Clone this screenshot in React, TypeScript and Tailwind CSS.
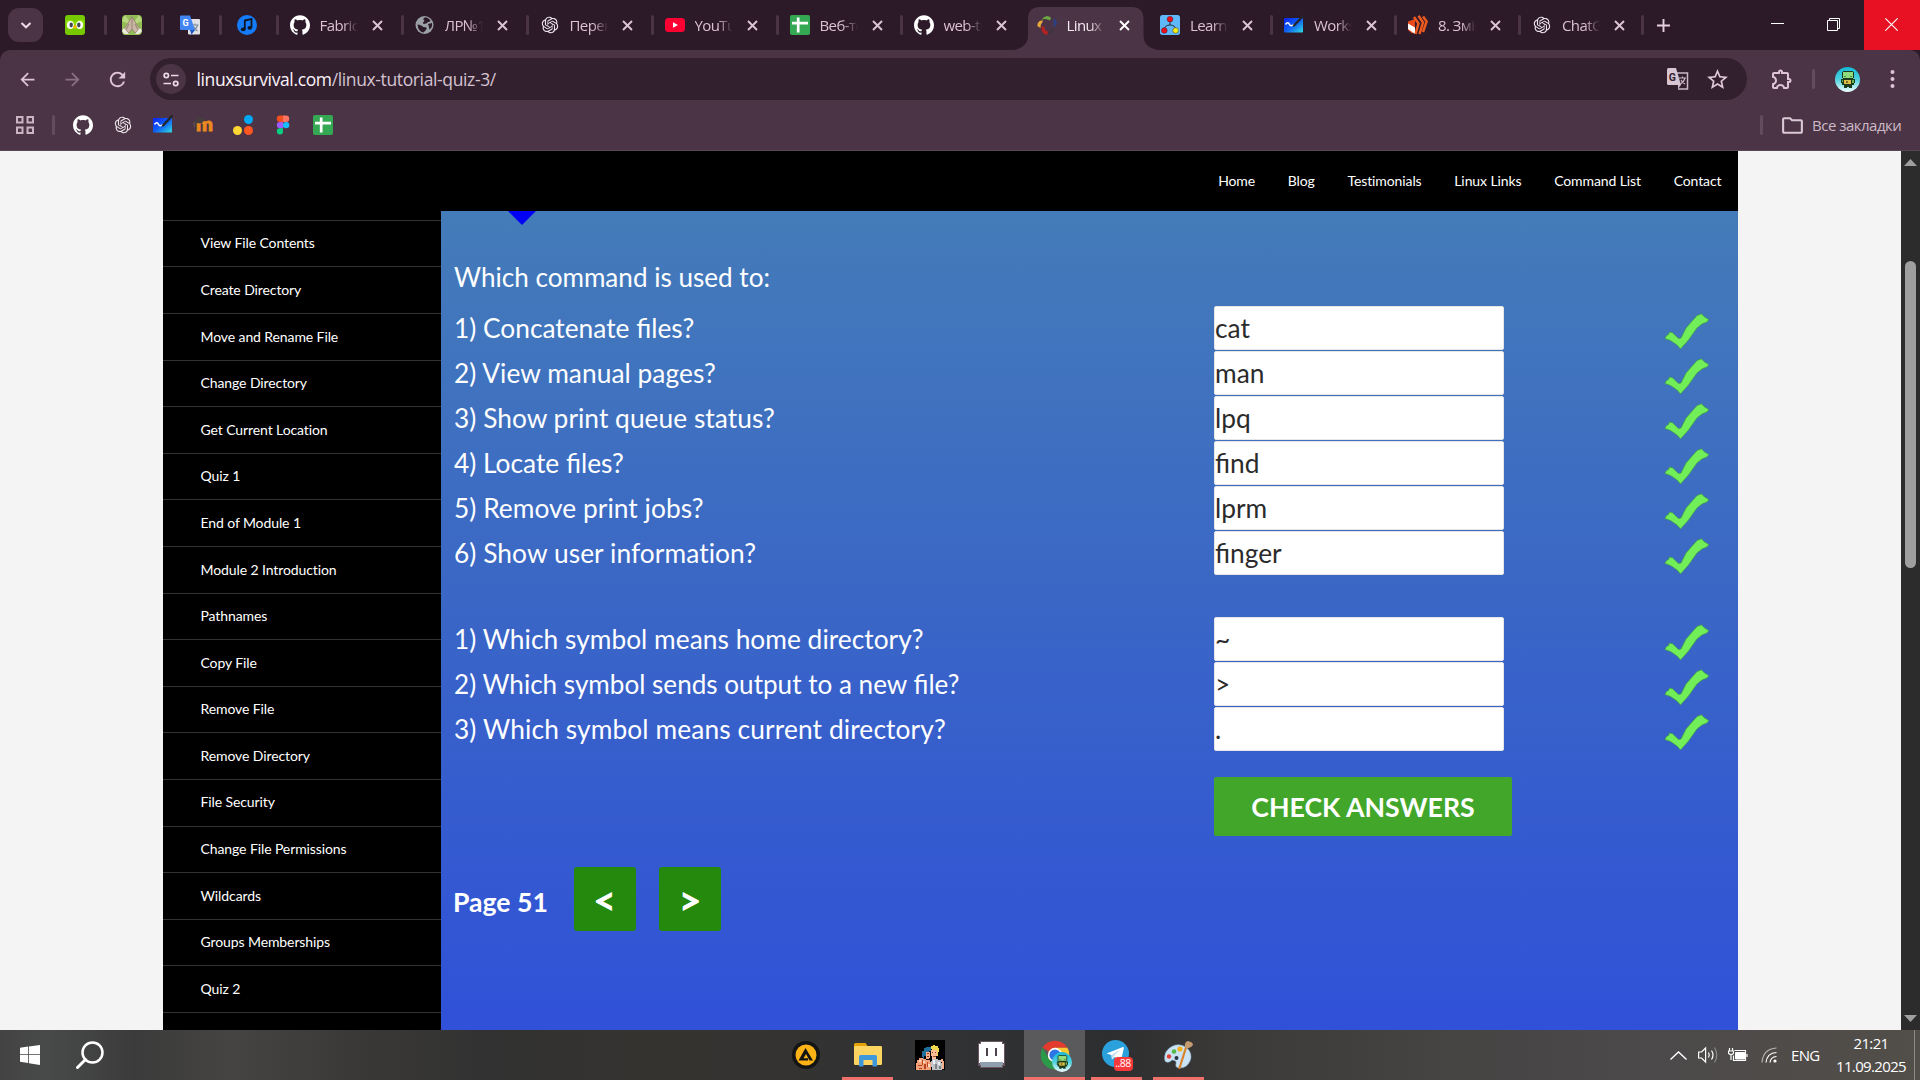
import React from "react";
import { SiGithub } from "react-icons/si";
import { RiOpenaiFill } from "react-icons/ri";
import {
  MdArrowBack,
  MdArrowForward,
  MdRefresh,
  MdOutlineExtension,
  MdStarOutline,
  MdOutlineFolder,
} from "react-icons/md";

const UI = "font-['Open_Sans','Noto_Sans',sans-serif]";

/* ---------- site icons ---------- */

const Duo = () => (
  <svg className="size-5" viewBox="0 0 20 20">
    <rect width="20" height="20" rx="3" fill="#78c800" />
    <path d="M1 6q4-3 9 1 5-4 9-1v5q-3 5-9 2-6 3-9-2z" fill="#8ee000" />
    <ellipse cx="5.4" cy="10" rx="3.4" ry="4" fill="#fff" />
    <ellipse cx="14.6" cy="10" rx="3.4" ry="4" fill="#fff" />
    <ellipse cx="6.2" cy="10" rx="1.7" ry="2.4" fill="#3c4a54" />
    <ellipse cx="13.8" cy="10" rx="1.7" ry="2.4" fill="#3c4a54" />
    <path d="M8 11.5l2-1.8 2 1.8-2 2.8z" fill="#ffb100" />
  </svg>
);

const Hands = () => (
  <svg className="size-5" viewBox="0 0 20 20">
    <rect width="20" height="20" rx="4" fill="#93bd55" />
    <path d="M0 6L10 10 3 0zM20 6L10 10 17 0zM0 15l9-4-7 9z" fill="#b9d77f" />
    <path d="M9.8 1.5L5 10 2 14l5 4 3-4 3 4 5-4-3-4z" fill="#c9b6a4" stroke="#8a7768" strokeWidth=".7" />
    <path d="M10 3v11M7 9l-3 6M13 9l3 6" stroke="#8a7768" strokeWidth=".8" />
    <path d="M2 13l5 6H3l-3-3zM18 13l-5 6h4l3-3z" fill="#efe9df" />
  </svg>
);

const TranslateBlue = () => (
  <svg className="size-5" viewBox="0 0 20 20">
    <rect x="8" y="4" width="12" height="15.5" rx="1" fill="#dfe1e5" />
    <path d="M11.5 10h7M15 8.500V10M17.500 10q-1 4-5 6M13.500 11.500q1.500 3 4 4.500" stroke="#7b8a99" strokeWidth="1.100" fill="none" />
    <path d="M1 .5h9l5 14.500H1a1 1 0 0 1-1-1v-12.500a1 1 0 0 1 1-1z" fill="#4285f4" />
    <path d="M10 15h5l-3.500 4.500z" fill="#1a56c4" />
    <text x="2.600" y="11" fontSize="9" fontWeight="700" fill="#fff" fontFamily="Roboto">G</text>
  </svg>
);

const Music = () => (
  <svg className="size-5" viewBox="0 0 20 20">
    <circle cx="10" cy="10" r="10" fill="#147cfb" />
    <path d="M7.500 5.500l7-1.500v8.500" stroke="#101522" strokeWidth="1.800" fill="none" />
    <path d="M7.800 5v9.500" stroke="#101522" strokeWidth="1.800" />
    <ellipse cx="6.200" cy="14.300" rx="2.300" ry="1.900" fill="#101522" />
    <ellipse cx="12.800" cy="12.800" rx="2.300" ry="1.900" fill="#101522" />
  </svg>
);

const Github = () => <SiGithub className="size-5 text-white" />;
const Gpt = () => <RiOpenaiFill className="size-5 text-[#eee6ec]" />;

const Globe = () => (
  <svg className="size-5" viewBox="0 0 20 20">
    <circle cx="9.500" cy="10" r="9" fill="#9aa0a6" />
    <path d="M2.500 9.500q3 0 4.500 1.500t3.500 1.200q2 .5.500 2.800l-2.500 2.500Q3 16.500 2.500 9.500zM10.500 2.300q3 .2 5 3.200-1 1.800-2.600 1.500-1.200 2-3 1.800-2.700.5-1.700-1.600Q10.700 5 8 4.500q.5-2 2.500-2.200z" fill="#2d1a29" />
    <path d="M13 9l4-1q.8 4-2.500 6.500Q14 11 13 9z" fill="#2d1a29" />
  </svg>
);

const Youtube = () => (
  <svg className="size-5" viewBox="0 0 20 20">
    <rect y="3" width="20" height="14" rx="3.500" fill="#ff0033" />
    <path d="M8 7.200v5.600L13 10z" fill="#fff" />
  </svg>
);

const Sheets = () => (
  <svg className="size-5" viewBox="0 0 20 20">
    <rect width="20" height="20" rx="2" fill="#34a853" />
    <path d="M2 8.200h16M8.200 2.500v15" stroke="#fff" strokeWidth="2.700" />
  </svg>
);

const LinuxFav = () => (
  <svg className="size-5" viewBox="0 0 20 20">
    <path d="M4.500 4.500Q9-1.500 14 2.500l-1 3Q9 3 4.500 4.500z" fill="#6da544" />
    <path d="M16.500 3q3.500 2 3.500 6l-4 3.500q1-5 .5-9.500z" fill="#2a4284" />
    <path d="M.3 11Q.5 5 6 5.500l-1 2.500q-1.500 1-1.500 5z" fill="#e9a93a" />
    <path d="M4.500 11q-1 8 5.500 9l2-3.500q-4.500 0-4.500-5z" fill="#b02323" />
    <path d="M10.500 16.500q3 .5 5-2l1-2.500q1 5-4 7z" fill="#3c3540" />
  </svg>
);

const GitTree = () => (
  <svg className="size-5" viewBox="0 0 20 20">
    <rect width="20" height="20" rx="2.500" fill="#5fb8fa" />
    <path d="M10 5v5M4.500 14q.5-4 5.500-4t5.500 4" stroke="#23303c" strokeWidth="1" fill="none" />
    <circle cx="10" cy="4.200" r="2.800" fill="#f20d1b" stroke="#5b1620" strokeWidth=".6" />
    <circle cx="4.300" cy="15.500" r="2.800" fill="#f20d1b" stroke="#5b1620" strokeWidth=".6" />
    <circle cx="15.600" cy="15.500" r="2.800" fill="#f6f11c" stroke="#4b4b16" strokeWidth=".6" />
  </svg>
);

const Whiteboard = () => (
  <svg className="size-5" viewBox="0 0 20 20">
    <defs>
      <linearGradient id="wb" x1="0" y1="0" x2="1" y2="1">
        <stop offset="0" stopColor="#0a22f0" />
        <stop offset=".5" stopColor="#0f5ff5" />
        <stop offset="1" stopColor="#2fe0e0" />
      </linearGradient>
    </defs>
    <rect y="3" width="19" height="14.500" rx=".8" fill="url(#wb)" />
    <path d="M1.500 9.500q2.500-3.500 4 0 1.200 2.500 4.500 0" stroke="#fff" strokeWidth="1.500" fill="none" />
    <path d="M10 10.500L19 1" stroke="#23252b" strokeWidth="2.400" strokeLinecap="round" />
  </svg>
);

const Stripes = () => (
  <svg className="size-5" viewBox="0 0 20 20">
    <path d="M0 6.500L7 4v12.500l-3 2L0 15z" fill="#e8481c" />
    <path d="M0 8.500l7 4v6.500l-7-5z" fill="#fff" />
    <path d="M6 2l4.500 6.500L7.500 19M10.500 .8L15 7.500 11.500 19M15 1.500l3.700 5L15 17" stroke="#ec5a20" strokeWidth="2.500" fill="none" />
  </svg>
);

const Moodle = () => (
  <svg className="size-5" viewBox="0 0 20 20">
    <text x="3" y="16" fontSize="19" fontWeight="900" fill="#ea8a1e" stroke="#ea8a1e" strokeWidth=".9" fontFamily="Lato" textLength="17" lengthAdjust="spacingAndGlyphs">m</text>
    <path d="M0 6.500l6-4 7 1-4.500 5L2 8z" fill="#463d40" />
    <path d="M1.200 7v5" stroke="#6b5a5c" strokeWidth="1" />
  </svg>
);

const Dots3 = () => (
  <svg className="size-5" viewBox="0 0 20 20">
    <circle cx="15.500" cy="4.500" r="4.500" fill="#00a8f5" />
    <circle cx="4.500" cy="15.500" r="4.500" fill="#ffd735" />
    <circle cx="15.500" cy="15.500" r="4.500" fill="#ff5722" />
  </svg>
);

const Figma = () => (
  <svg className="size-5" viewBox="0 0 20 20">
    <path d="M10 .5H7a3.200 3.200 0 0 0 0 6.400h3z" fill="#f24e1e" />
    <path d="M10 .5h3a3.200 3.200 0 0 1 0 6.400h-3z" fill="#ff7262" />
    <path d="M10 6.900H7a3.200 3.200 0 0 0 0 6.400h3z" fill="#a259ff" />
    <circle cx="13.100" cy="10.100" r="3.200" fill="#1abcfe" />
    <path d="M7 13.300h3v3a3.100 3.100 0 1 1-3-3z" fill="#0acf83" />
  </svg>
);

/* ---------- browser ---------- */

const CloseX = ({ active = false }: { active?: boolean }) => (
  <svg
    className={active ? "size-[11px] shrink-0 text-white" : "size-[11px] shrink-0 text-[#dcc5d6]"}
    viewBox="0 0 11 11"
  >
    <path d="M1 1l9 9M10 1l-9 9" stroke="currentColor" strokeWidth="1.900" />
  </svg>
);

const pinned = [
  { icon: <Duo />, w: "w-[57px]", pad: "pl-[15px]" },
  { icon: <Hands />, w: "w-[57px]", pad: "pl-[15px]" },
  { icon: <TranslateBlue />, w: "w-[58px]", pad: "pl-[16px]" },
  { icon: <Music />, w: "w-[57px]", pad: "pl-[15px]" },
];

const tabs = [
  { title: "Fabric.js", icon: <Github />, w: "w-[125px]", sep: true },
  { title: "ЛР№1", icon: <Globe />, w: "w-[125px]", sep: true },
  { title: "Перекл", icon: <Gpt />, w: "w-[125px]", sep: true },
  { title: "YouTube", icon: <Youtube />, w: "w-[125px]", sep: true },
  { title: "Веб-тех", icon: <Sheets />, w: "w-[124px]", sep: true },
  { title: "web-tech", icon: <Github />, w: "w-[123px]", sep: false },
  { title: "Linux S", icon: <LinuxFav />, w: "w-[123.500px]", sep: false, active: true },
  { title: "Learn G", icon: <GitTree />, w: "w-[124px]", sep: true },
  { title: "Works", icon: <Whiteboard />, w: "w-[124px]", sep: true },
  { title: "8. Змін", icon: <Stripes />, w: "w-[124px]", sep: true },
  { title: "ChatGPT", icon: <Gpt />, w: "w-[123px]", sep: true },
];

function TabStrip() {
  return (
    <div className="flex h-[50px] shrink-0 items-center bg-[#2d1a29]">
      <div className="ml-2 flex h-[34px] w-[35px] items-center justify-center rounded-[11px] bg-[#4a3445]">
        <svg className="size-3" viewBox="0 0 12 12">
          <path d="M1.500 4l4.500 4.300L10.500 4" stroke="#eedbe8" strokeWidth="2" fill="none" />
        </svg>
      </div>
      <div className="ml-[7px] flex items-center">
        {pinned.map((p, i) => (
          <div key={i} className={`flex shrink-0 items-center justify-between ${p.w} ${p.pad}`}>
            {p.icon}
            <i className="h-5 w-[3px] rounded-sm bg-[#4a3445]" />
          </div>
        ))}
      </div>
      <div className="-ml-[0.500px] flex">
        {tabs.map((t) => (
          <div key={t.title} className={`relative flex h-[50px] shrink-0 items-center pl-[11px] ${t.w}`}>
            {t.active && (
              <svg className="absolute top-[7px] -left-[13px] h-[43px] w-[147px]" viewBox="0 0 147 43">
                <path d="M0 43Q15 41 15 28V12Q15 0 27 0H118.500Q130.500 0 130.500 12V28Q130.500 41 145.500 43Z" fill="#4a3445" />
              </svg>
            )}
            <div className="relative size-5 shrink-0">{t.icon}</div>
            <div
              className={
                t.active
                  ? `relative mt-px ml-[10px] w-[38px] overflow-hidden whitespace-nowrap text-[15px] tracking-[-0.600px] text-[#f5e8f1] [mask-image:linear-gradient(90deg,#000_60%,transparent)] ${UI}`
                  : `relative mt-px ml-[10px] w-[38px] overflow-hidden whitespace-nowrap text-[15px] tracking-[-0.600px] text-[#dcc0d5] [mask-image:linear-gradient(90deg,#000_60%,transparent)] ${UI}`
              }
            >
              {t.title}
            </div>
            <div className="relative ml-[14px] flex">
              <CloseX active={t.active} />
            </div>
            {t.sep && <i className="ml-auto h-5 w-[3px] rounded-sm bg-[#4a3445]" />}
          </div>
        ))}
      </div>
      <svg className="ml-[13px] size-[13px] shrink-0" viewBox="0 0 13 13">
        <path d="M0 6.500h13M6.500 0v13" stroke="#e6cfe0" strokeWidth="1.900" />
      </svg>
      <div className="ml-auto flex h-full shrink-0">
        <div className="flex w-[56px] items-center justify-center pr-[5px] pb-[3px]">
          <i className="h-px w-[13px] bg-white" />
        </div>
        <div className="flex w-[56px] items-center justify-center pr-[5px] pb-px">
          <svg className="size-[13px]" viewBox="0 0 13 13" fill="none" stroke="#fff">
            <path d="M.5 2.500h10v10H.5zM2.500 2.500v-2h10v10h-2" />
          </svg>
        </div>
        <div className="flex w-[56px] items-center justify-center bg-[#e81123] pr-px pb-px">
          <svg className="size-[13px]" viewBox="0 0 13 13">
            <path d="M.3.3l12.400 12.400M12.700.3L.3 12.700" stroke="#fff" strokeWidth="1.100" />
          </svg>
        </div>
      </div>
    </div>
  );
}

const Avatar = ({ className }: { className: string }) => (
  <svg className={className} viewBox="0 0 25 25">
    <defs>
      <linearGradient id="av" x1="0" y1="0" x2="0" y2="1">
        <stop offset="0" stopColor="#12b8d4" />
        <stop offset=".5" stopColor="#4fd0df" />
        <stop offset="1" stopColor="#f1ffff" />
      </linearGradient>
    </defs>
    <circle cx="12.500" cy="12.500" r="12.500" fill="url(#av)" />
    <path d="M8 4h10v1h1v6h-1v1h2v4h-1v2h-2v3h-3v-1h-2v1H9v-3H7v-2H6v-4h2v-1H7V5h1z" fill="#1d3a1c" />
    <path d="M8 5h10v6H8z" fill="#8fdc7c" />
    <path d="M9 9h2v1H9zM15 9h2v1h-2z" fill="#4d8a45" />
    <path d="M9 13h7v4H9z" fill="#d9c04a" />
    <path d="M11 14h2v2h-2z" fill="#8a6a1f" />
    <path d="M17 13h2v3h-2zM7 13h1v2H7z" fill="#63b552" />
  </svg>
);

function Toolbar() {
  return (
    <div className="flex h-[50px] shrink-0 items-center pt-[8px]">
      <MdArrowBack className="ml-[17px] size-[21px] text-[#dfc4d8]" />
      <MdArrowForward className="ml-[24px] size-[21px] text-[#8b7084]" />
      <MdRefresh className="ml-[23px] size-[23px] text-[#dfc4d8]" />
      <div className="ml-[21px] flex h-[42px] w-[1597px] items-center rounded-full bg-[#33202f] pl-[6px]">
        <div className="flex size-[30px] items-center justify-center rounded-full bg-[#4a3445]">
          <svg className="h-[15px] w-4" viewBox="0 0 16 15" fill="none" stroke="#ecdbe7" strokeWidth="1.700">
            <circle cx="3.300" cy="3.500" r="2.200" />
            <path d="M8 3.500h7.500M.5 11.500H8" />
            <circle cx="12.700" cy="11.500" r="2.200" />
          </svg>
        </div>
        <div className={`mt-px ml-[10.500px] whitespace-nowrap text-[17.500px] tracking-[-0.370px] text-[#d4c3cf] ${UI}`}>
          <span className="text-[#fbf3f9]">linuxsurvival.com</span>/linux-tutorial-quiz-3/
        </div>
        <svg className="ml-auto size-[22px]" viewBox="0 0 22 22">
          <path d="M9 5h11.500v16H11" fill="none" stroke="#cdb9c7" strokeWidth="1.500" />
          <path d="M1.500 0H9l5 17H1.500Q0 17 0 15.500v-14Q0 0 1.500 0z" fill="#d8c6d3" />
          <path d="M12 10h7M15.500 8.500V10M18 10q-1 4-4.500 6M14 12q1.500 2.500 4 4" stroke="#cdb9c7" strokeWidth="1.200" fill="none" />
          <path d="M11 17h3l-3 4z" fill="#cdb9c7" />
          <text x="1.800" y="12.500" fontSize="10.500" fontWeight="700" fill="#33202f" fontFamily="Roboto">G</text>
        </svg>
        <MdStarOutline className="mr-[17px] ml-[16px] size-[25px] text-[#dfc9da]" />
      </div>
      <MdOutlineExtension className="ml-[23px] size-[24px] text-[#dfc4d8]" />
      <i className="ml-[18px] h-5 w-[3px] rounded-sm bg-[#644c5f]" />
      <Avatar className="ml-[20px] size-[25px]" />
      <svg className="ml-[30px] h-5 w-[5px]" viewBox="0 0 5 20" fill="#dfc4d8">
        <circle cx="2.500" cy="3" r="2" />
        <circle cx="2.500" cy="10" r="2" />
        <circle cx="2.500" cy="17" r="2" />
      </svg>
    </div>
  );
}

function Bookmarks() {
  return (
    <div className="flex h-[50px] shrink-0 items-center">
      <svg className="ml-[15.500px] size-[18px]" viewBox="0 0 18 18" fill="none" stroke="#cbb5c5" strokeWidth="2">
        <path d="M1 1h5.500v5.500H1zM11.500 1H17v5.500h-5.500zM1 11.500h5.500V17H1zM11.500 11.500H17V17h-5.500z" />
      </svg>
      <i className="ml-[18.500px] h-5 w-[3px] rounded-sm bg-[#644c5f]" />
      <div className="ml-[18px] flex gap-[20px]">
        <Github />
        <Gpt />
        <Whiteboard />
        <Moodle />
        <Dots3 />
        <Figma />
        <Sheets />
      </div>
      <i className="ml-auto h-5 w-[3px] rounded-sm bg-[#644c5f]" />
      <MdOutlineFolder className="ml-[17px] size-[25px] text-[#dcc9d7]" />
      <span className={`ml-[7px] w-[108px] whitespace-nowrap text-[15px] tracking-[-0.500px] text-[#cdb9c7] ${UI}`}>
        Все закладки
      </span>
    </div>
  );
}

/* ---------- page ---------- */

const menu = [
  "View File Contents",
  "Create Directory",
  "Move and Rename File",
  "Change Directory",
  "Get Current Location",
  "Quiz 1",
  "End of Module 1",
  "Module 2 Introduction",
  "Pathnames",
  "Copy File",
  "Remove File",
  "Remove Directory",
  "File Security",
  "Change File Permissions",
  "Wildcards",
  "Groups Memberships",
  "Quiz 2",
];

const commands = [
  { q: "1) Concatenate files?", a: "cat", cls: "" },
  { q: "2) View manual pages?", a: "man", cls: "tracking-[0.050px]" },
  { q: "3) Show print queue status?", a: "lpq", cls: "tracking-[0.040px]" },
  { q: "4) Locate files?", a: "find", cls: "" },
  { q: "5) Remove print jobs?", a: "lprm", cls: "tracking-[0.050px]" },
  { q: "6) Show user information?", a: "finger", cls: "tracking-[0.080px]" },
];

const symbols = [
  { q: "1) Which symbol means home directory?", a: "~", cls: "tracking-[0.030px]" },
  { q: "2) Which symbol sends output to a new file?", a: ">", cls: "text-[26.100px]" },
  { q: "3) Which symbol means current directory?", a: ".", cls: "tracking-[0.120px]" },
];

const Check = () => (
  <svg className="mt-[7px] h-[37px] w-[46px]" viewBox="0 0 46 37">
    <path
      d="M.8 25.500L2.500 22.500 4.500 21.500 5.500 19 8.500 19.800 14.500 25.500 17 25 22 15 29 7 33 2.500 37.500.8 40 3.500 44.800 6.500 43 9 38 11 33 15 24.500 27 21 31 16.500 36 13 32 6.500 27.500z"
      fill="#72ef58"
      stroke="#3f9a4c"
      strokeWidth=".8"
    />
  </svg>
);

function QuizRow({ q, a, cls }: { q: string; a: string; cls: string }) {
  return (
    <div className="flex h-[45px]">
      <div className={`h-[44px] w-[760px] leading-[44px] ${cls}`}>{q}</div>
      <div className="h-[44px] w-[290px] rounded-[2px] border border-[#e6e6e6] bg-white leading-[42px] text-[#2b2b2b]">
        {a}
      </div>
      <div className="ml-[160px]">
        <Check />
      </div>
    </div>
  );
}

function Quiz() {
  return (
    <main className="w-[1297px] bg-[linear-gradient(180deg,#447cb9_0%,#3a66c6_48%,#3051d8_100%)] text-[26.300px] text-white">
      <svg className="ml-[67px] h-[14px] w-7" viewBox="0 0 28 14">
        <path d="M0 0h28L14 14z" fill="#0000f5" />
      </svg>
      <div className="pl-[13px]">
        <div className="mt-[30px] mb-[7px] text-[26.100px] leading-[44px]">Which command is used to:</div>
        {commands.map((r) => (
          <QuizRow key={r.q} {...r} />
        ))}
        <div className="h-[41px]" />
        {symbols.map((r) => (
          <QuizRow key={r.q} {...r} />
        ))}
        <button className="mt-[25px] ml-[760px] flex h-[59px] w-[298px] items-center justify-center rounded-[2px] bg-[#41a62a] pt-px text-[26.700px] font-bold">
          CHECK ANSWERS
        </button>
        <div className="mt-[31px] flex h-16 items-center text-[26.600px] font-bold">
          <span className="-ml-px w-[121px] pt-[7px]">Page 51</span>
          <button className="h-16 w-[62px] rounded-[3px] bg-[#24890d] pt-px pr-px text-[40px] leading-none font-black">&lt;</button>
          <button className="ml-[23px] h-16 w-[62px] rounded-[3px] bg-[#24890d] pt-px text-[40px] leading-none font-black">&gt;</button>
        </div>
      </div>
    </main>
  );
}

function Page() {
  return (
    <div className="flex h-[879px] shrink-0 justify-between overflow-hidden bg-[#f4f4f4] font-[Lato,sans-serif]">
      <div className="ml-[163px] flex w-[1575px] flex-col">
        <header className="flex h-[60px] shrink-0 items-center justify-end gap-[32.700px] bg-black pr-[16.500px] pb-px text-[14px] tracking-[-0.100px] text-white">
          {["Home", "Blog", "Testimonials", "Linux Links", "Command List", "Contact"].map((n) => (
            <a key={n}>{n}</a>
          ))}
        </header>
        <div className="flex grow">
          <nav className="w-[278px] shrink-0 bg-black pt-[8.800px] text-[14px] tracking-[-0.100px] text-white">
            {menu.map((m) => (
              <a key={m} className="flex h-[46.600px] items-center border-t border-[#333] pb-[1.500px] pl-[37.500px]">
                {m}
              </a>
            ))}
            <div className="border-t border-[#333]" />
          </nav>
          <Quiz />
        </div>
      </div>
      <div className="flex w-[19px] flex-col items-center justify-between bg-[#2c2c2c] pt-2 pb-2">
        <svg className="h-[7px] w-[13px]" viewBox="0 0 13 7">
          <path d="M6.500 0L13 7H0z" fill="#9f9f9f" />
        </svg>
        <div className="mt-[95px] mb-auto h-[307px] w-[11px] rounded-full bg-[#9f9f9f]" />
        <svg className="h-[7px] w-[13px]" viewBox="0 0 13 7">
          <path d="M0 0h13L6.500 7z" fill="#9f9f9f" />
        </svg>
      </div>
    </div>
  );
}

/* ---------- taskbar ---------- */

const Aimp = () => (
  <svg className="size-7" viewBox="0 0 28 28">
    <circle cx="14" cy="14" r="14" fill="#141414" />
    <circle cx="14" cy="14" r="10.500" fill="#fbb216" />
    <path d="M13.500 7l7.500 12.500h-3.500L14 13l-2.500 4.200H16v2.300H6.500z" fill="#141414" />
  </svg>
);

const Explorer = () => (
  <svg className="h-6 w-7" viewBox="0 0 28 24">
    <path d="M0 1.500Q0 0 1.500 0h10l2 3H27v6H0z" fill="#e2a208" />
    <rect y="3" width="28" height="19" rx="1.200" fill="#fcd462" />
    <path d="M5 23.500V13.500q0-1.500 1.500-1.500h15q1.500 0 1.500 1.500v10h-4.500V17h-9v6.500z" fill="#3f97dc" />
  </svg>
);

const Contra = () => (
  <svg className="size-[30px]" viewBox="0 0 30 30" shapeRendering="crispEdges">
    <rect width="30" height="30" fill="#000" />
    <path d="M9 8h2V7h5v4h-2v2h-3v3H9v3H8v-2H7v-6h2z" fill="#1f6f9c" />
    <path d="M11 12h4v6h-1v1h-3z" fill="#f6b089" />
    <path d="M12 13h2v1h-2zM12 16h2v1h-2z" fill="#8c3b1e" />
    <path d="M16 6h2V5h2v1h3v2h1v4h-1v4h-1v-5h-5v-2h-1z" fill="#f0d64a" />
    <path d="M16 10h6v6h-1v3h-4v-3h-1z" fill="#f9bd98" />
    <path d="M17 12h1v1h-1zM20 12h1v1h-1zM18 16h3v1h-3z" fill="#9c4a25" />
    <path d="M1 23h1v-3h2v-2h4v1h3v1h4v2h1v8H1z" fill="#f4a27c" />
    <path d="M3 25h4v1H3zM7 20h1v5H7zM9 24h2v5H9zM12 22h1v5h-1zM4 28h3v1H4z" fill="#b8441f" />
    <path d="M4 20h2v2H4zM8 21h2v2H8zM13 24h2v3h-2z" fill="#ffd8bc" />
    <path d="M17 19h6v1h3v3h1v7H17v-3h-1v-6h1z" fill="#bfc3c7" />
    <path d="M18 20h2v4h-2zM23 22h2v3h-2z" fill="#eef1f3" />
    <path d="M20 24h2v5h-2zM24 26h2v3h-2z" fill="#7d8388" />
    <path d="M26 19h2v2h1v8h-2v-7h-1z" fill="#f6b089" />
  </svg>
);

const Robot = () => (
  <svg className="size-[27px]" viewBox="0 0 27 27" shapeRendering="crispEdges">
    <path d="M2 0h23v2h2v23h-2v2H2v-2H0V2h2z" fill="#6c5560" />
    <path d="M3 1h21v2h2v19H1V3h2z" fill="#fff" />
    <path d="M2 21h23v3h-1v2H3v-2H2z" fill="#8ea0ad" />
    <path d="M8 7h2v8H8zM17 7h2v8h-2z" fill="#4c434b" />
  </svg>
);

const Chrome = () => (
  <div className="relative size-[30px]">
    <svg className="size-[30px]" viewBox="0 0 48 48">
      <path d="M24 24L4.100 12.500A23 23 0 0 1 43.900 12.500H24z" fill="#e33b2e" />
      <path d="M14 18L24 12.500h19.900A23 23 0 0 1 24 47L14 30z" fill="#fcc934" />
      <path d="M4.100 12.500L14 30l10 5.500 9-5.500L24 47A23 23 0 0 1 4.100 12.500z" fill="#2a9a48" />
      <circle cx="24" cy="24" r="11.500" fill="#fff" />
      <circle cx="24" cy="24" r="9" fill="#2f74e4" />
    </svg>
    <Avatar className="absolute top-[12px] left-[12px] size-5" />
  </div>
);

const Telegram = () => (
  <div className="relative h-[30px] w-[30px]">
    <svg className="size-[27px]" viewBox="0 0 27 27">
      <circle cx="13.500" cy="13.500" r="13.500" fill="#2aa1dd" />
      <path d="M4.500 13.500L21 7q1 0 .8 1.200L19 20.500q-.4 1-1.500.3L12.500 17l-2.500 2.500-.6-4.500z" fill="#fff" />
      <path d="M9.400 15L18 9.500l-6 6.500-2 3.500z" fill="#c4dff0" />
    </svg>
    <span className={`absolute top-[17px] left-[12px] flex h-[14px] w-[19px] items-center justify-center rounded-[4px] bg-[#f5383b] text-[10.500px] leading-none tracking-[-0.500px] text-white ${UI}`}>
      ..88
    </span>
  </div>
);

const Paint = () => (
  <svg className="h-[28px] w-[30px]" viewBox="0 0 30 28">
    <path d="M1 20Q-1 11 7 6t16 1q6 6 3 13t-10 7q-5 0-4-4t-4-4q-4 4-7 1z" fill="#c9e3f4" stroke="#8db4cf" strokeWidth=".6" />
    <circle cx="5" cy="15.500" r="2.200" fill="#e34234" />
    <circle cx="10" cy="10.500" r="2.300" fill="#56b848" />
    <circle cx="16" cy="8" r="2.600" fill="#f3b11b" />
    <circle cx="12.500" cy="17" r="2" fill="#2b3440" />
    <path d="M15.500 27L22.500 5" stroke="#d9822b" strokeWidth="2.200" strokeLinecap="round" />
    <path d="M21 6Q20 1 24 0q5 1 5 4-2 3-5.500 3.500z" fill="#c59b71" />
  </svg>
);

function Task({ children, open, active }: { children: React.ReactNode; open?: boolean; active?: boolean }) {
  return (
    <div className={active ? "ml-px flex h-full w-[61px] flex-col bg-[#5a5a5c]" : "flex h-full w-[61px] flex-col px-[5px]"}>
      <div className="flex grow items-center justify-center pt-[2px]">{children}</div>
      <div className={open ? "h-[3px] bg-[#f0716b]" : "h-[3px]"} />
    </div>
  );
}

function Taskbar() {
  return (
    <div className="flex h-[50px] shrink-0 items-stretch bg-[linear-gradient(90deg,#434343_0%,#484a49_2.500%,#3b3b3b_7%,#454442_12%,#393836_19%,#323232_25%,#353330_35%,#313234_50%,#2d2e30_58%,#3c3a38_64%,#454443_75%,#4b494a_85%,#524e49_100%)]">
      <div className="flex w-[775px] items-center">
        <svg className="ml-[20px] size-5" viewBox="0 0 20 20" fill="#fff">
          <path d="M0 2.800l8.200-1.200v7.600H0zM9 1.400L20 0v9.200H9zM0 10h8.200v7.900L0 16.700zM9 10h11v10L9 18.300z" />
        </svg>
        <svg className="ml-[36px] size-7" viewBox="0 0 28 28" fill="none" stroke="#fff">
          <circle cx="16.500" cy="11.500" r="10" strokeWidth="2.500" />
          <path d="M9.500 18.500L1.500 26.500" strokeWidth="3" strokeLinecap="round" />
        </svg>
      </div>
      <div className="flex gap-px">
        <Task><Aimp /></Task>
        <Task open><Explorer /></Task>
        <Task><Contra /></Task>
        <Task><Robot /></Task>
        <Task open active><Chrome /></Task>
        <Task open><Telegram /></Task>
        <Task open><Paint /></Task>
      </div>
      <div className={`ml-auto flex items-center text-white ${UI}`}>
        <svg className="h-[9px] w-[17px]" viewBox="0 0 17 9" fill="none" stroke="#fff" strokeWidth="1.400">
          <path d="M.5 8.500l8-7.500 8 7.500" />
        </svg>
        <svg className="ml-[11px] h-[18px] w-[21px]" viewBox="0 0 21 18" fill="none" stroke="#fff" strokeWidth="1.200">
          <path d="M.6 6h3l4-4v14l-4-4h-3z" />
          <path d="M10.500 6.500q1.500 2.500 0 5M13.500 4.500q3 4.500 0 9" />
          <path d="M16.500 1.500q4.500 7.500 0 15" stroke="#8b8a89" />
        </svg>
        <svg className="ml-[9px] h-[14px] w-5" viewBox="0 0 20 14" fill="none" stroke="#fff">
          <path d="M6.500 2.500h11v10h-12v-5" strokeWidth="1.200" />
          <path d="M7.500 4.500h9v6.500h-9z" fill="#fff" />
          <path d="M19 6v3M1.500 0v3M4.500 0v3M.5 3h5v2q-.5 1.500-2.500 1.500T.5 5zM3 6.500V12" strokeWidth="1.200" />
        </svg>
        <svg className="ml-[13px] size-4" viewBox="0 0 16 16" fill="none" stroke="#fff" strokeWidth="1.200">
          <circle cx="14" cy="14" r="1.600" fill="#fff" stroke="none" />
          <path d="M9 15.500Q9.500 10 15.500 9.500M5 15.500Q6 6 15.500 5.500" />
          <path d="M1 15.500Q2 2 15.500 1" stroke="#b5b3b1" />
        </svg>
        <span className="mt-px ml-[14px] w-[29px] text-[15px] tracking-[-0.700px]">ENG</span>
        <div className="ml-[15px] w-[72px] text-center text-[15px] leading-[23px] tracking-[-0.650px] whitespace-nowrap">
          <div>21:21</div>
          <div>11.09.2025</div>
        </div>
        <i className="mr-[5px] ml-[7px] h-full w-px bg-[#8d8a86]" />
      </div>
    </div>
  );
}

export default function App() {
  return (
    <div className="flex h-[1083px] w-[1920px] flex-col overflow-hidden bg-white">
      <TabStrip />
      <div className="bg-[#2d1a29]">
        <div className="rounded-t-[10px] border-b border-[#5b4456] bg-[#4a3445]">
          <Toolbar />
          <Bookmarks />
        </div>
      </div>
      <Page />
      <Taskbar />
    </div>
  );
}
